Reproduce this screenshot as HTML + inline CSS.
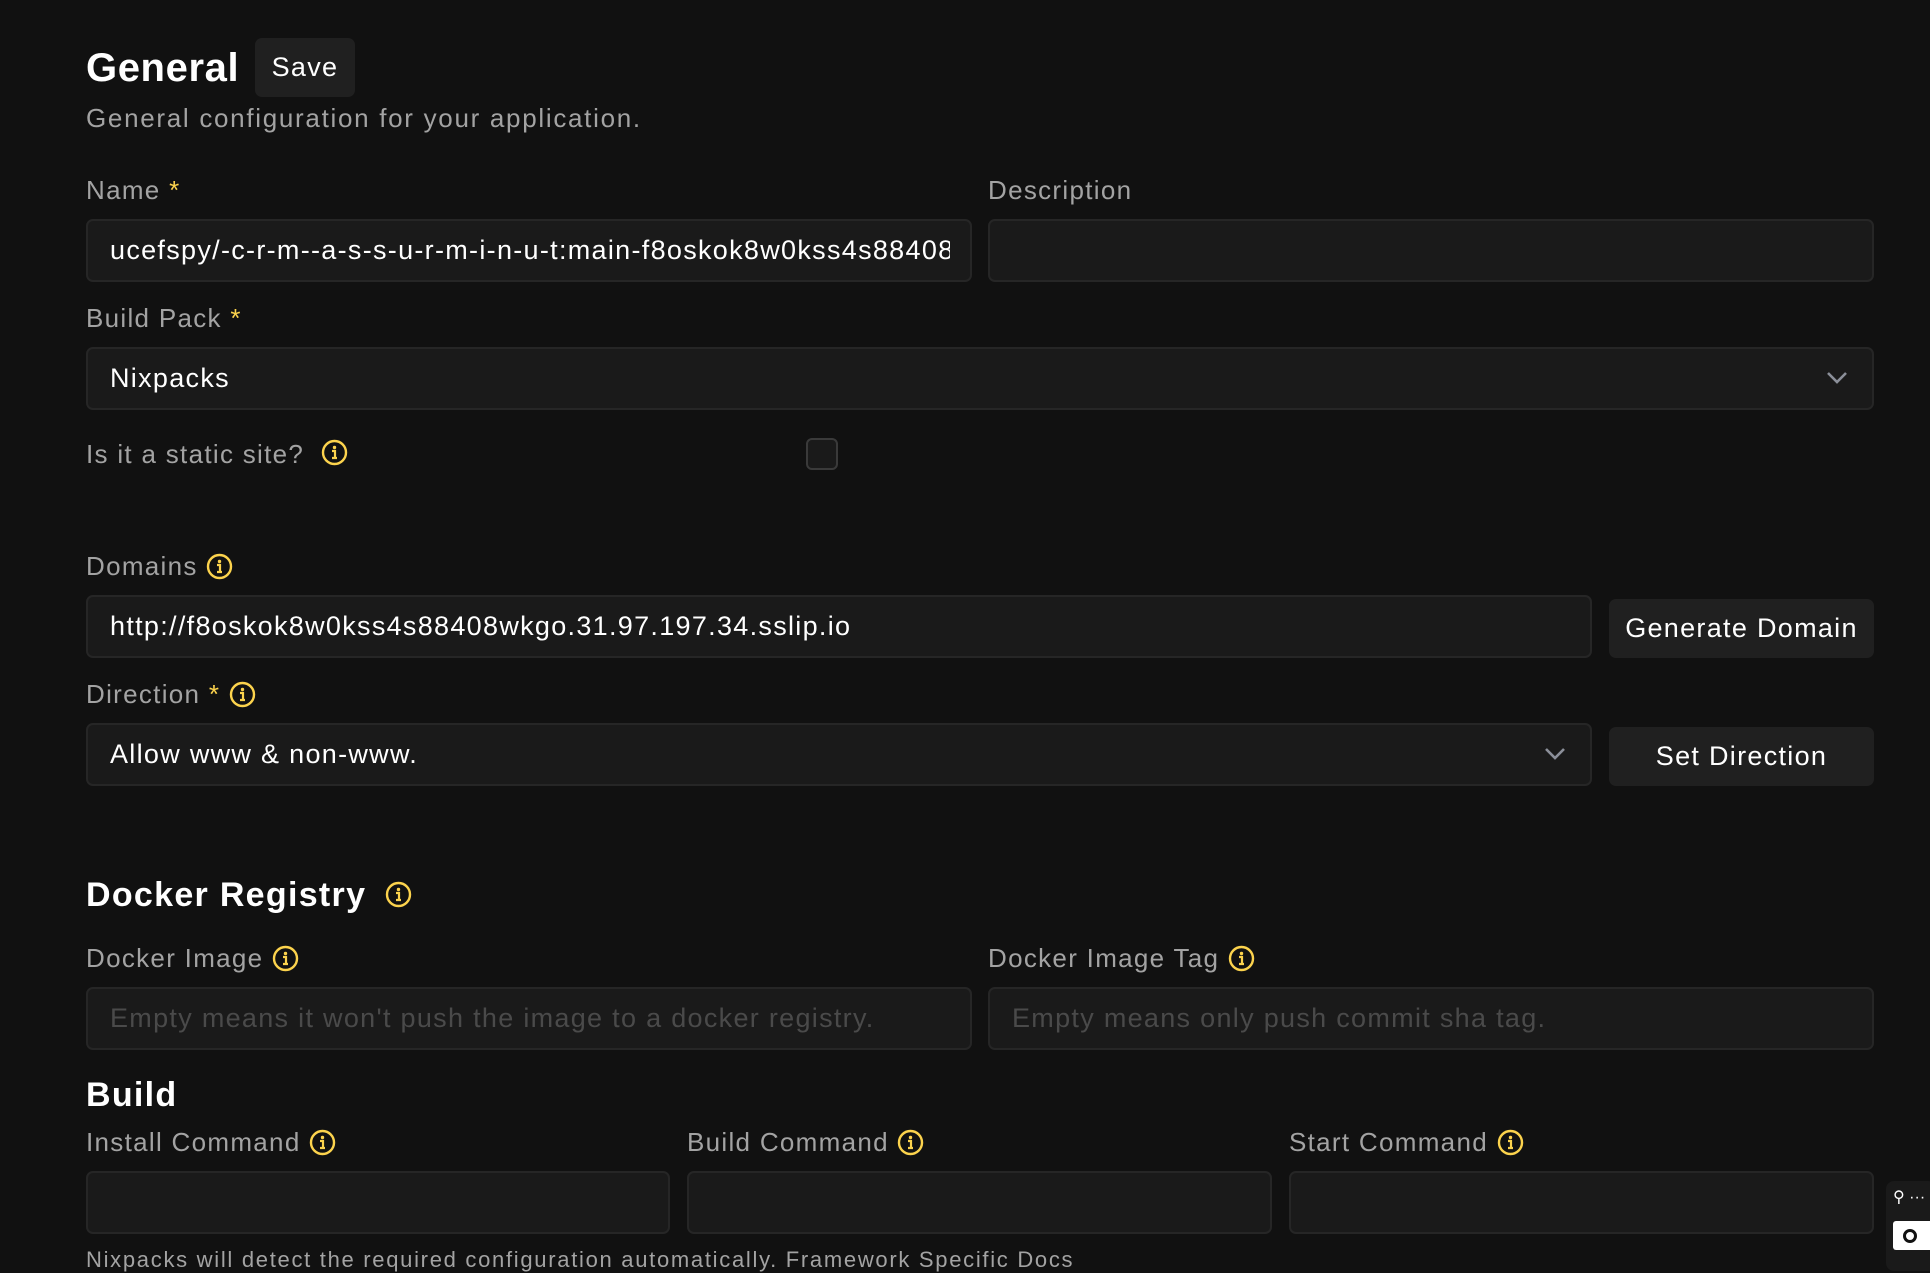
<!DOCTYPE html><html><head><style>
body{margin:0;width:1930px;height:1260px;background:#111111;font-family:"Liberation Sans",sans-serif;overflow:hidden;position:relative;color:#fff;letter-spacing:1.3px}
.a{position:absolute;white-space:nowrap}
.lbl{color:#a3a3a3;font-size:26px;line-height:30px}
.st{color:#fcd34d}
.in{position:absolute;background:#1a1a1a;border:2px solid #262626;border-radius:7px;box-sizing:border-box;font-size:27px;color:#fff;padding-left:22px;display:flex;align-items:center;overflow:hidden;white-space:nowrap}
.ph{color:#4a4a4a}
.btn{position:absolute;background:#202020;border-radius:7px;font-size:27px;display:flex;align-items:center;justify-content:center;color:#fff}
.ic{display:inline-block;vertical-align:middle;width:27px;height:27px}
.chev{position:absolute;right:24px;top:50%;margin-top:-8px}
</style></head><body>
<svg width="0" height="0" style="position:absolute"><defs><g id="i"><circle cx="13.5" cy="13.5" r="11.5" fill="none" stroke="#fcd34d" stroke-width="2.4"/><circle cx="13.5" cy="8.5" r="1.7" fill="#fcd34d"/><path d="M11 12h3v7M11 19h5" stroke="#fcd34d" stroke-width="2.2" fill="none"/></g></defs></svg>
<div class="a" style="left:86px;top:44px;font-size:40px;font-weight:bold;line-height:48px;letter-spacing:0.6px">General</div>
<div class="btn" style="left:255px;top:38px;width:100px;height:59px">Save</div>
<div class="a" style="left:86px;top:103px;font-size:26px;color:#a3a3a3;letter-spacing:1.7px">General configuration for your application.</div>

<div class="a lbl" style="left:86px;top:175px">Name <span class="st">*</span></div>
<div class="a lbl" style="left:988px;top:175px">Description</div>
<div class="in" style="left:86px;top:219px;width:886px;height:63px"><span style="display:inline-block;width:840px;overflow:hidden">ucefspy/-c-r-m--a-s-s-u-r-m-i-n-u-t:main-f8oskok8w0kss4s88408wkgo</span></div>
<div class="in" style="left:988px;top:219px;width:886px;height:63px"></div>

<div class="a lbl" style="left:86px;top:303px">Build Pack <span class="st">*</span></div>
<div class="in" style="left:86px;top:347px;width:1788px;height:63px">Nixpacks<svg class="chev" width="22" height="14"><path d="M2 2l9 9 9-9" stroke="#8b8f99" stroke-width="2.6" fill="none"/></svg></div>

<div class="a lbl" style="left:86px;top:439px">Is it a static site? &nbsp;<svg class="ic" style="margin-top:-8px"><use href="#i"/></svg></div>
<div class="a" style="left:806px;top:438px;width:32px;height:32px;box-sizing:border-box;border:2px solid #3a3a3a;border-radius:6px;background:#1a1a1a"></div>

<div class="a lbl" style="left:86px;top:551px">Domains <svg class="ic" style="margin-top:-4px"><use href="#i"/></svg></div>
<div class="in" style="left:86px;top:595px;width:1506px;height:63px">http://f8oskok8w0kss4s88408wkgo.31.97.197.34.sslip.io</div>
<div class="btn" style="left:1609px;top:599px;width:265px;height:59px">Generate Domain</div>

<div class="a lbl" style="left:86px;top:679px">Direction <span class="st">*</span> <svg class="ic" style="margin-top:-4px"><use href="#i"/></svg></div>
<div class="in" style="left:86px;top:723px;width:1506px;height:63px">Allow www &amp; non-www.<svg class="chev" width="22" height="14"><path d="M2 2l9 9 9-9" stroke="#8b8f99" stroke-width="2.6" fill="none"/></svg></div>
<div class="btn" style="left:1609px;top:727px;width:265px;height:59px">Set Direction</div>

<div class="a" style="left:86px;top:874px;font-size:34px;font-weight:bold;line-height:42px">Docker Registry <svg class="ic" style="margin-left:8px;margin-top:-6px"><use href="#i"/></svg></div>
<div class="a lbl" style="left:86px;top:943px">Docker Image <svg class="ic" style="margin-top:-4px"><use href="#i"/></svg></div>
<div class="a lbl" style="left:988px;top:943px">Docker Image Tag <svg class="ic" style="margin-top:-4px"><use href="#i"/></svg></div>
<div class="in" style="left:86px;top:987px;width:886px;height:63px"><span class="ph">Empty means it won't push the image to a docker registry.</span></div>
<div class="in" style="left:988px;top:987px;width:886px;height:63px"><span class="ph">Empty means only push commit sha tag.</span></div>

<div class="a" style="left:86px;top:1074px;font-size:34px;font-weight:bold;line-height:42px">Build</div>
<div class="a lbl" style="left:86px;top:1127px">Install Command <svg class="ic" style="margin-top:-4px"><use href="#i"/></svg></div>
<div class="a lbl" style="left:687px;top:1127px">Build Command <svg class="ic" style="margin-top:-4px"><use href="#i"/></svg></div>
<div class="a lbl" style="left:1289px;top:1127px">Start Command <svg class="ic" style="margin-top:-4px"><use href="#i"/></svg></div>
<div class="in" style="left:86px;top:1171px;width:584px;height:63px"></div>
<div class="in" style="left:687px;top:1171px;width:585px;height:63px"></div>
<div class="in" style="left:1289px;top:1171px;width:585px;height:63px"></div>
<div class="a" style="left:86px;top:1247px;font-size:22px;color:#a3a3a3;letter-spacing:1.7px">Nixpacks will detect the required configuration automatically. Framework Specific Docs</div>

<div class="a" style="left:1886px;top:1181px;width:50px;height:90px;background:#1a1a1a;border-radius:8px"></div>
<div class="a" style="left:1893px;top:1187px;font-size:16px;color:#fff;letter-spacing:0">⚲ ···</div>
<div class="a" style="left:1893px;top:1221px;width:40px;height:29px;background:#fff;border-radius:3px"><div style="position:absolute;left:10px;top:8px;width:14px;height:14px;border:3px solid #111;border-radius:50%;box-sizing:border-box"></div></div>
</body></html>
